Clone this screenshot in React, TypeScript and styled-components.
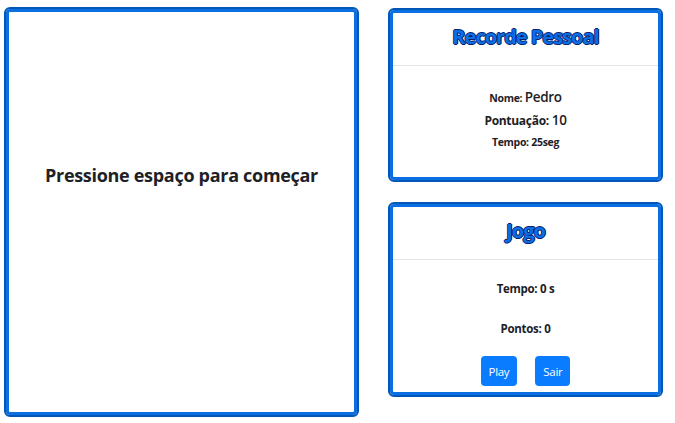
import React from "react";
import styled, { createGlobalStyle } from "styled-components";

const Global = createGlobalStyle`
  html, body { margin: 0; padding: 0; background: #fff; }
  body { font-family: "Open Sans", "DejaVu Sans", sans-serif; color: #212529; }
  * { box-sizing: border-box; }
`;

const Page = styled.div`
  display: grid;
  grid-template-columns: 355px 275px;
  column-gap: 29px;
  padding: 7px 0 0 4px;
  align-items: start;
`;

const Card = styled.div<{ $h: number }>`
  height: ${(p) => p.$h}px;
  border: 2px solid #0057b7;
  border-radius: 6px;
  box-shadow: inset 0 0 0 3px #0a70e2;
  background: #fff;
  display: flex;
  flex-direction: column;
  padding: 3px;
`;

const Stage = styled(Card)`
  align-items: center;
  padding-top: 154px;
`;

const StageText = styled.div`
  font-size: 18px;
  font-weight: 700;
  letter-spacing: -0.3px;
  color: #1d2126;
`;

const Side = styled.div`
  display: flex;
  flex-direction: column;
  gap: 20px;
  padding-top: 1px;
`;

const Header = styled.div`
  height: 53px;
  border-bottom: 1px solid #e2e4e7;
  display: flex;
  align-items: center;
  justify-content: center;
  padding-bottom: 6px;
`;

const Title = styled.h2`
  margin: 0;
  font-size: 20px;
  font-weight: 700;
  letter-spacing: -1px;
  color: #0a6fe3;
  text-shadow: -1px 0 #0a1f6e, 1px 0 #0a1f6e, 0 -1px #0a1f6e, 0 1px #0a1f6e;
`;

const Body = styled.div<{ $gap: number; $top: number }>`
  flex: 1;
  display: flex;
  flex-direction: column;
  align-items: center;
  gap: ${(p) => p.$gap}px;
  padding-top: ${(p) => p.$top}px;
`;

const Line = styled.div<{ $size: number }>`
  font-size: ${(p) => p.$size}px;
  font-weight: 700;
  letter-spacing: -0.3px;
  line-height: 1.2;
  color: #1d2126;
`;

const Big = styled.span`
  font-size: 13.5px;
  font-weight: 600;
`;

const Buttons = styled.div`
  display: flex;
  align-self: center;
  gap: 18px;
  margin: 10px 0 6px;
`;

const Button = styled.button`
  height: 30px;
  padding: 0 8px;
  border: none;
  border-radius: 4px;
  background: #0a7cff;
  color: #fff;
  font-family: "Open Sans", sans-serif;
  font-size: 11.5px;
  letter-spacing: -0.3px;
`;

export default function App() {
  return (
    <>
      <Global />
      <Page>
        <Stage $h={410}>
          <StageText>Pressione espaço para começar</StageText>
        </Stage>
        <Side>
          <Card $h={174}>
            <Header>
              <Title>Recorde Pessoal</Title>
            </Header>
            <Body $gap={7} $top={23}>
              <Line $size={10.5}>
                Nome: <Big>Pedro</Big>
              </Line>
              <Line $size={12}>
                Pontuação: <Big>10</Big>
              </Line>
              <Line $size={10.5}>Tempo: 25seg</Line>
            </Body>
          </Card>
          <Card $h={195}>
            <Header>
              <Title>Jogo</Title>
            </Header>
            <Body $gap={26} $top={22}>
              <Line $size={11.5}>Tempo: 0 s</Line>
              <Line $size={11.5}>Pontos: 0</Line>
            </Body>
            <Buttons>
              <Button>Play</Button>
              <Button>Sair</Button>
            </Buttons>
          </Card>
        </Side>
      </Page>
    </>
  );
}
